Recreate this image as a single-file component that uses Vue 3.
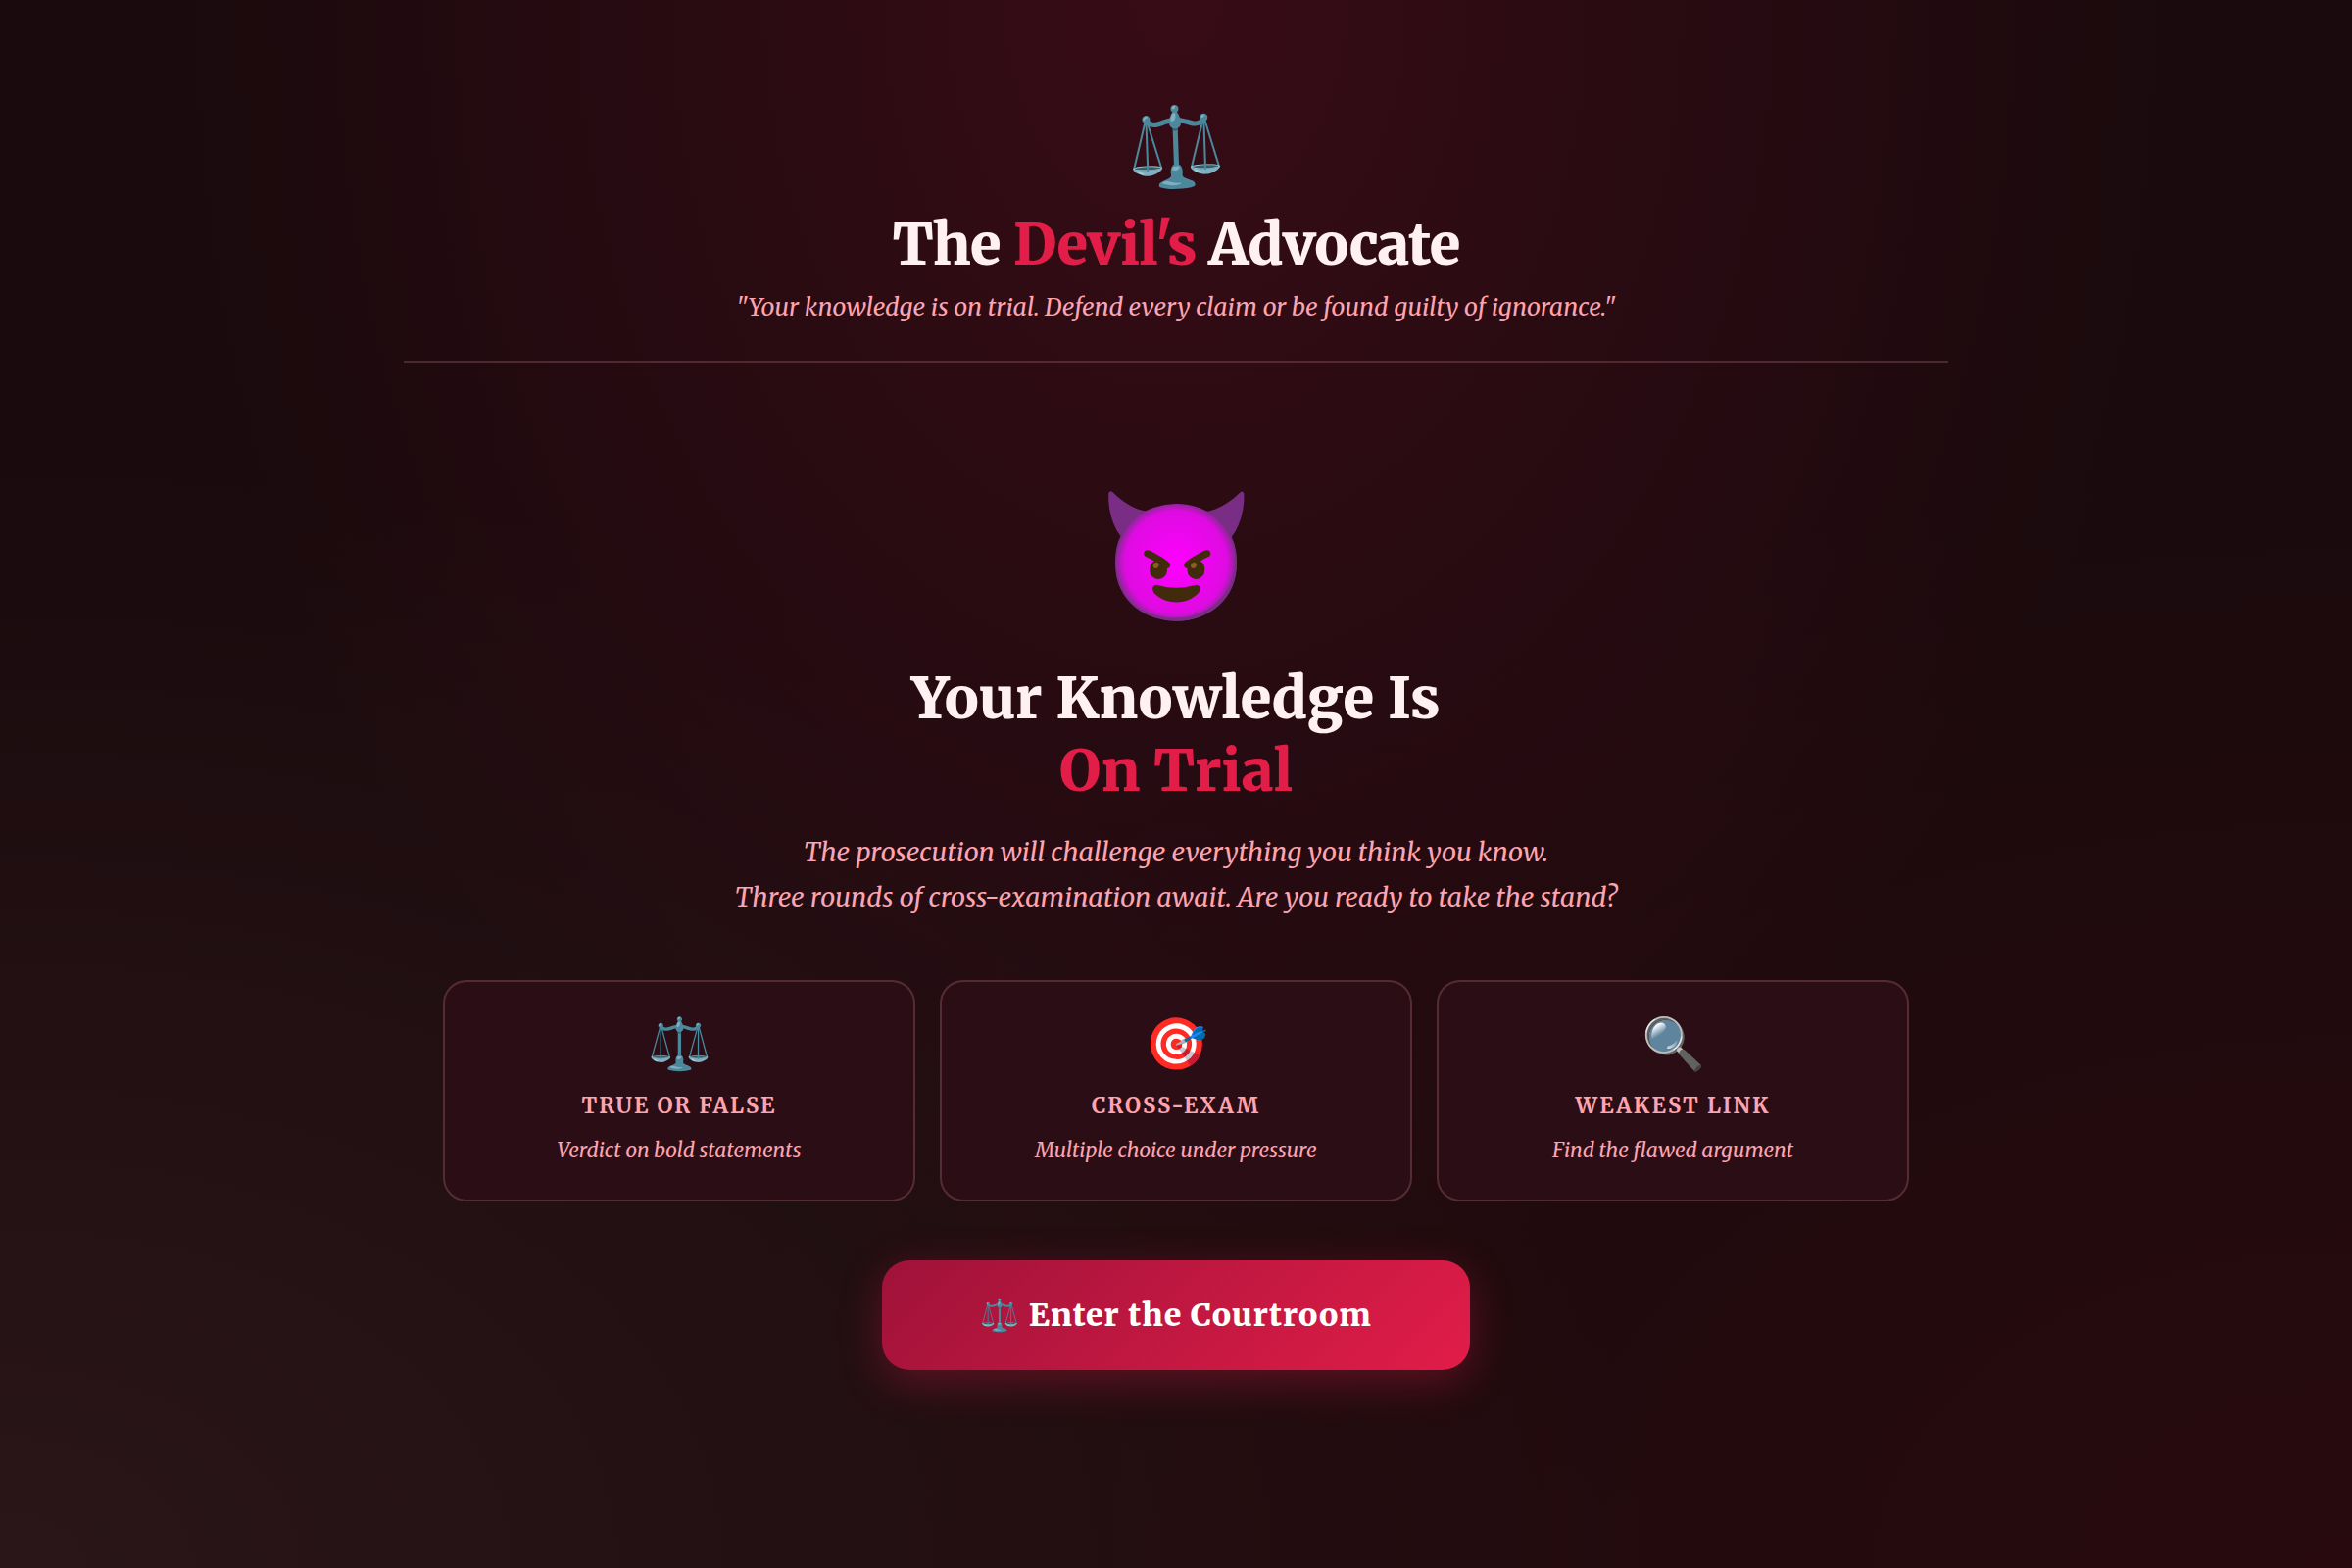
<template>
  <div class="app">
    <div class="container">
      <header class="header">
        <div class="logo">⚖️</div>
        <h1>The <span class="accent">Devil's</span> Advocate</h1>
        <p class="tagline">"Your knowledge is on trial. Defend every claim or be found guilty of ignorance."</p>
      </header>

      <main class="intro">
        <div class="devil">😈</div>
        <h2>Your Knowledge Is<br /><span class="accent">On Trial</span></h2>
        <p class="lead">
          The prosecution will challenge everything you think you know.<br />
          Three rounds of cross-examination await. Are you ready to take the stand?
        </p>

        <div class="rounds">
          <div v-for="round in rounds" :key="round.title" class="round">
            <div class="round-icon">{{ round.icon }}</div>
            <h3>{{ round.title }}</h3>
            <p>{{ round.description }}</p>
          </div>
        </div>

        <button type="button" class="start">⚖️ Enter the Courtroom</button>
      </main>
    </div>
  </div>
</template>

<script setup>
const rounds = [
  { icon: '⚖️', title: 'True or False', description: 'Verdict on bold statements' },
  { icon: '🎯', title: 'Cross-Exam', description: 'Multiple choice under pressure' },
  { icon: '🔍', title: 'Weakest Link', description: 'Find the flawed argument' },
];
</script>

<style>
body {
  background: #1a0a0d;
}
</style>

<style scoped>
.app {
  box-sizing: border-box;
  min-height: 100vh;
  padding: 96px 32px;
  font-family: Merriweather, "Noto Serif", serif;
  color: #fff1f2;
  background:
    radial-gradient(ellipse at 50% 0%, rgba(159, 18, 57, 0.22) 0%, transparent 60%),
    radial-gradient(ellipse at 100% 100%, rgba(127, 10, 20, 0.14) 0%, transparent 50%),
    radial-gradient(ellipse at 0% 100%, rgba(120, 80, 80, 0.17) 0%, transparent 50%),
    #1a0a0d;
}

.container {
  max-width: 1576px;
  margin: 0 auto;
}

h1,
h2,
h3,
p {
  margin: 0;
}

.accent {
  color: #e11d48;
}

.header {
  padding-bottom: 34px;
  border-bottom: 2px solid rgba(253, 164, 175, 0.2);
  text-align: center;
}

.logo {
  margin-bottom: 13px;
  font-size: 80px;
  line-height: 106px;
  transform: rotate(-2deg);
}

h1 {
  margin-bottom: 7px;
  font-size: 58px;
  font-weight: 900;
  line-height: 70px;
  letter-spacing: -1px;
}

.tagline {
  font-size: 25px;
  font-style: italic;
  line-height: 42px;
  color: #fda4af;
}

.intro {
  padding: 116px 40px 0;
  text-align: center;
}

.devil {
  margin-bottom: 28px;
  font-size: 129px;
  line-height: 162px;
}

h2 {
  margin-bottom: 22px;
  font-size: 58px;
  font-weight: 900;
  line-height: 74px;
}

.lead {
  margin-bottom: 62px;
  font-size: 27px;
  font-style: italic;
  line-height: 46px;
  color: #fda4af;
}

.rounds {
  display: grid;
  grid-template-columns: repeat(3, 1fr);
  gap: 25px;
  margin-bottom: 60px;
}

.round {
  padding: 32px;
  border: 2px solid rgba(253, 164, 175, 0.2);
  border-radius: 24px;
  background: #2b0e15;
}

.round-icon {
  margin-bottom: 14px;
  font-size: 52px;
  line-height: 62px;
}

.round h3 {
  margin-bottom: 10px;
  font-size: 22px;
  font-weight: 700;
  line-height: 36px;
  letter-spacing: 2px;
  text-transform: uppercase;
  color: #fda4af;
}

.round p {
  font-size: 21px;
  font-style: italic;
  line-height: 36px;
  color: #fda4af;
}

.start {
  width: 600px;
  max-width: 100%;
  padding: 32px;
  border: none;
  border-radius: 28px;
  background: linear-gradient(135deg, #9f1239, #e11d48);
  box-shadow: 0 12px 44px rgba(225, 29, 72, 0.32);
  font-family: inherit;
  font-size: 32px;
  font-weight: 900;
  line-height: 48px;
  letter-spacing: 1px;
  color: #fff;
  cursor: pointer;
}
</style>
